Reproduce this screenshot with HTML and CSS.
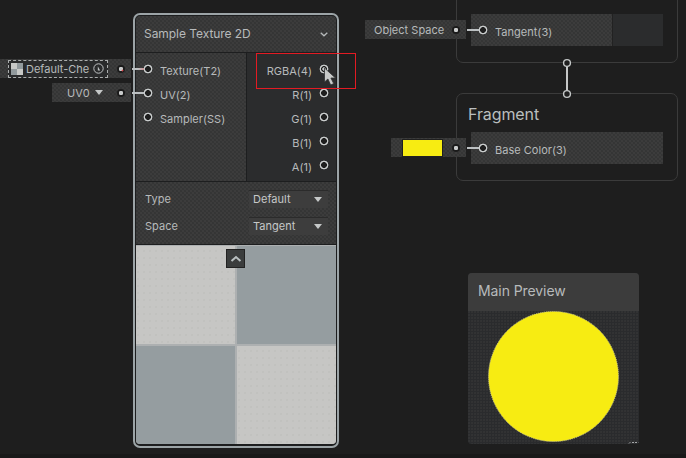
FILE: index.html
```
<!DOCTYPE html>
<html lang="en">
<head>
<meta charset="utf-8">
<title>Shader Graph</title>
<link rel="stylesheet" href="styles.css">
</head>
<body>
<main class="canvas">
  <section class="stack vertex">
    <div class="block grain"><i class="port"></i><span>Tangent(3)</span><b class="block-tail"></b></div>
  </section>
  <section class="stack fragment">
    <h2>Fragment</h2>
    <div class="block grain"><i class="port"></i><span>Base Color(3)</span></div>
  </section>
  <svg class="link" width="10" height="42" viewBox="0 0 10 42"><path d="M5 8v26" stroke="#c5c7c7" stroke-width="2"/><circle cx="5" cy="5" r="3.4"/><circle cx="5" cy="36" r="3.4"/></svg>

  <div class="input input-object grain"><span>Object Space</span><i class="pin"></i></div>
  <div class="input input-color grain"><i class="swatch"></i><i class="pin"></i></div>
  <div class="input input-texture grain">
    <div class="picker"><i class="checker"></i><span>Default-Che</span>
      <svg width="11" height="11" viewBox="0 0 11 11"><circle cx="5.5" cy="5.5" r="4.7" fill="none" stroke="#c0c3c4"/><path d="M4.8 3.2v4.3h2.4z" fill="#c0c3c4"/></svg>
    </div><i class="pin pin-red"></i>
  </div>
  <div class="input input-uv grain"><span>UV0</span><i class="arrow"></i><i class="pin"></i></div>

  <article class="node">
    <header class="grain"><span>Sample Texture 2D</span><svg width="8" height="5" viewBox="0 0 8 5"><path d="M.7.7 4 3.8 7.3.7" fill="none" stroke="#b5b9ba" stroke-width="1.3"/></svg></header>
    <div class="ports">
      <ul class="ins grain"><li><i class="port"></i>Texture(T2)</li><li><i class="port"></i>UV(2)</li><li><i class="port"></i>Sampler(SS)</li></ul>
      <ul class="outs"><li><span>RGBA(4)</span><i class="port port-on"></i></li><li>R(1)<i class="port"></i></li><li>G(1)<i class="port"></i></li><li>B(1)<i class="port"></i></li><li>A(1)<i class="port"></i></li></ul>
    </div>
    <div class="settings grain">
      <div class="setting"><label>Type</label><div class="select">Default<i class="arrow"></i></div></div>
      <div class="setting"><label>Space</label><div class="select">Tangent<i class="arrow"></i></div></div>
    </div>
    <div class="preview"><i class="light"></i><i></i><i></i><i class="light"></i>
      <button class="collapse" aria-label="Collapse preview"><svg width="12" height="8" viewBox="0 0 12 8"><path d="M1.5 6 6 2l4.5 4" fill="none" stroke="#b8bfc0" stroke-width="2"/></svg></button>
    </div>
  </article>

  <i class="wire wire-texture"></i><i class="wire wire-uv"></i><i class="wire wire-object"></i><i class="wire wire-color"></i>

  <section class="main-preview">
    <h3>Main Preview</h3>
    <div class="sphere-area"><svg width="171" height="133" viewBox="0 0 171 133"><circle cx="85.5" cy="65.5" r="65" fill="#f7ec12" stroke="#c9c78a" stroke-width="1" stroke-dasharray="1 1"/><path d="M161 132.5l2-2M164 131.5h7" stroke="#a5a7a8" stroke-dasharray="2 1"/></svg></div>
  </section>

  <div class="highlight"></div>
  <svg class="cursor" width="14" height="20" viewBox="0 0 14 20"><path d="M1.5 1v14l3.4-3 2.8 6 3-1.4-2.8-5.6h4.6z" fill="#c8cac9" stroke="#303233" stroke-width=".8"/></svg>
</main>
</body>
</html>
```
FILE: styles.css
```
* { box-sizing: border-box; }
body { margin: 0; background: #1e1e1e; color: #b7babb; font: 11px/14px Inter, "Liberation Sans", sans-serif; letter-spacing: .02px; }
h2, h3, ul { margin: 0; padding: 0; font-weight: 400; list-style: none; }
span, label { white-space: nowrap; }
.canvas { position: relative; width: 686px; height: 458px; overflow: hidden; border-bottom: 4px solid #191919; }
.grain { background-color: #3c3c3c; background-image: radial-gradient(circle at 1px 1px, #303131 .65px, transparent .8px), radial-gradient(circle at 3px 3px, #303131 .65px, transparent .8px); background-size: 4px 4px; }

.port { flex: none; width: 10px; height: 10px; border-radius: 50%; background: radial-gradient(circle, #1e1e1e 2.6px, #c8cbcb 3.2px 4.1px, transparent 4.7px); }
.port-on { background: radial-gradient(circle, #c5c8c8 1.4px, #1e1e1e 2px 2.6px, #c8cbcb 3.2px 4.1px, transparent 4.7px); }
.pin { flex: none; width: 8px; height: 8px; margin-left: auto; border-radius: 50%; background: radial-gradient(circle, #c8caca 1.9px, #1b1b1b 2.5px); }
.pin-red { background: radial-gradient(circle at 5.5px 5.5px, #e0484e 0 .6px, transparent 1.2px), radial-gradient(circle, #c8caca 1.9px, #1b1b1b 2.5px); }
.arrow { border: 4.5px solid transparent; border-top: 5px solid #c5c8c8; border-bottom: 0; }

.stack { position: absolute; left: 456px; width: 222px; border: 1px solid #3b3b3b; border-radius: 7px; background: #1e1e1e; }
.vertex { top: -40px; height: 103px; padding: 53px 14px 0; }
.fragment { top: 93px; height: 88px; padding: 10px 14px 0; }
.fragment h2 { height: 28px; margin-left: -3px; font-size: 16px; line-height: 20px; letter-spacing: -.1px; color: #babebf; }
.block { display: flex; align-items: center; gap: 7px; height: 32px; padding-left: 7px; }
.block span { padding-top: 4px; }
.block-tail { align-self: stretch; width: 51px; margin-left: auto; border-left: 1px solid #222; background: #2b2c2d; }
.link { position: absolute; left: 562px; top: 58px; }
.link circle { fill: #1e1e1e; stroke: #c5c8c8; stroke-width: 1.4; }

.input { position: absolute; display: flex; align-items: center; height: 19px; }
.input-object { left: 365px; top: 20px; width: 101px; padding: 0 6px 0 9px; }
.input-color { left: 391px; top: 138px; width: 75px; padding: 0 6px 0 11px; }
.swatch { width: 41px; height: 18px; border: 1px solid #202020; background: #f7ec12; }
.input-texture { left: 0; top: 59px; width: 131px; padding: 0 6px 0 8px; }
.picker { display: flex; align-items: center; width: 100px; height: 18px; padding-left: 2px; border: 1px dashed #aaadad; background: #292a2b; letter-spacing: 0; }
.picker svg { flex: none; margin-left: 4px; }
.picker span { width: 63px; }
.checker { flex: none; width: 12px; height: 12px; margin-right: 3px; background: conic-gradient(#929a9d 25%, #c7c8c6 0 50%, #929a9d 0 75%, #c7c8c6 0); }
.input-uv { left: 52px; top: 83px; width: 79px; padding: 0 6px 0 15px; }
.input-uv .arrow { margin-left: 5px; }

.node { position: absolute; left: 133px; top: 13px; width: 206px; height: 435px; border: 2px solid #9ca4a7; border-radius: 7px; padding: 1px; overflow: hidden; background: #1d1e1f; }
.node header { display: flex; align-items: center; justify-content: space-between; height: 36px; padding: 0 8px 0 8px; border-radius: 4px 4px 0 0; font-size: 12px; letter-spacing: -.05px; }
.ports { display: grid; grid-template-columns: 110px 89px; gap: 1px; height: 130px; padding: 1px 0; }
.ports li { display: flex; align-items: center; height: 24px; }
.ins { padding: 6px 0 0 7px; }
.ins li { gap: 7px; }
.outs { padding: 6px 7px 0 0; background: #2b2c2d; }
.outs li { justify-content: flex-end; gap: 7px; }
.ports .port { margin-top: -4px; }
.settings { height: 62px; padding: 3px 8px 0 9px; }
.setting { display: flex; align-items: center; justify-content: space-between; height: 27px; }
.select { display: flex; align-items: center; justify-content: space-between; width: 79px; height: 18px; padding: 0 6px 0 4px; border-top: 1px solid #2b2b2b; background: #3d3d3d; color: #c6c8c8; }
.preview { position: relative; display: grid; grid-template-columns: 99px 99px; grid-template-rows: 98px 98px; gap: 2px; height: 199px; margin-top: 1px; padding: 1px 0 0; background: #adb0b1; border-radius: 0 0 4px 4px; overflow: hidden; }
.preview > i { background: #959da0; }
.preview .light { background: radial-gradient(circle at 2px 5px, #b5b6b4 .5px, transparent .8px) 0 0 / 6px 7px #c6c6c4; }
.collapse { position: absolute; left: 90px; top: 4px; display: grid; place-items: center; width: 19px; height: 19px; padding: 0; border: 1px solid #222; background: #3b3d3d; }

.wire { position: absolute; height: 2px; background: #bcc0c2; }
.wire-texture { left: 132px; top: 68px; width: 12px; background: linear-gradient(90deg, #bcc0c2 50%, #ca9194); }
.wire-uv { left: 132px; top: 92px; width: 12px; }
.wire-object { left: 467px; top: 29px; width: 12px; }
.wire-color { left: 467px; top: 147px; width: 12px; }

.main-preview { position: absolute; left: 468px; top: 273px; width: 171px; height: 171px; border-radius: 4px; overflow: hidden; background: #2e2f30; }
.main-preview h3 { height: 38px; padding: 8px 10px; background: #3c3c3c; font-size: 14px; line-height: 19px; letter-spacing: -.08px; }
.sphere-area { height: 133px; background: radial-gradient(circle at 1px 1px, #3a3b3b .6px, transparent .8px) 0 0 / 3px 3px #2a2b2d; }
.sphere-area svg { display: block; }
.highlight { position: absolute; left: 256px; top: 53px; width: 100px; height: 36px; border: 1px solid #e31b23; }
.cursor { position: absolute; left: 323px; top: 67px; }
```
